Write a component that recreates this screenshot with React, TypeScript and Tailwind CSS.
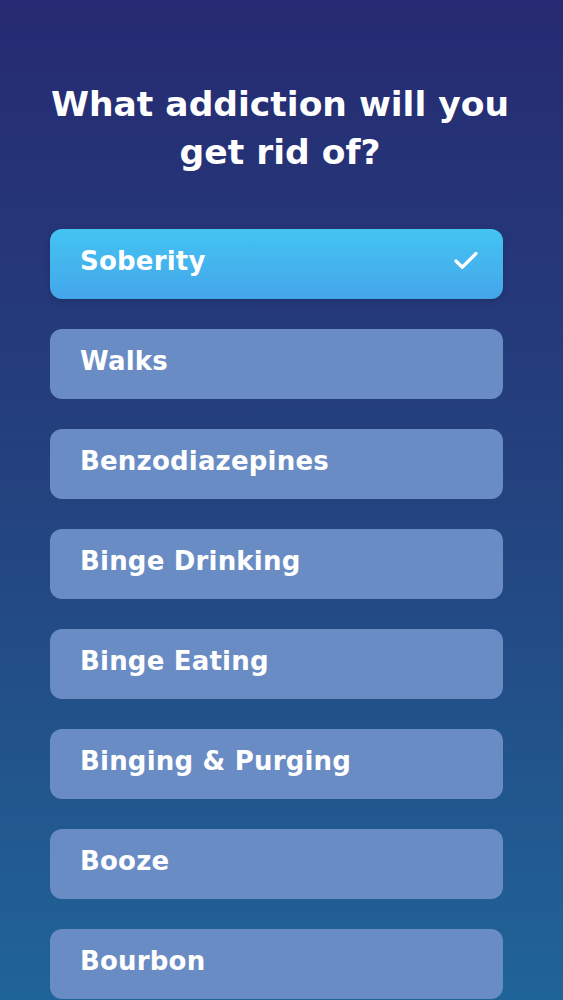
import { Check } from 'lucide-react';

const options = [
  'Soberity',
  'Walks',
  'Benzodiazepines',
  'Binge Drinking',
  'Binge Eating',
  'Binging & Purging',
  'Booze',
  'Bourbon',
];

export default function App() {
  return (
    <div
      className="h-[1000px] w-full overflow-hidden bg-gradient-to-b from-[#262a72] via-[#23437f] to-[#1f6498] pt-[80px]"
      style={{ fontFamily: '"DejaVu Sans", "Open Sans", sans-serif' }}
    >
      <h1 className="whitespace-nowrap pr-[3px] text-center text-[34.5px] font-bold leading-[48px] text-white">
        What addiction will you
        <br />
        get rid of?
      </h1>

      <div className="mt-[53px] flex flex-col gap-[30px] pl-[50px] pr-[60px]">
        {options.map((name, i) => (
          <button
            key={name}
            className={
              i === 0
                ? 'flex h-[70px] w-full shrink-0 items-center justify-between rounded-[12px] bg-gradient-to-b from-[#43c4f2] to-[#44a6ea] pl-[30px] pr-[22px] pb-[6px] text-left shadow-[0_2px_6px_rgba(0,0,0,0.15)]'
                : 'flex h-[70px] w-full shrink-0 items-center rounded-[12px] bg-[#6a8cc4] pl-[30px] pb-[6px] text-left'
            }
          >
            <span className="text-[26px] font-bold tracking-[0.2px] text-white">{name}</span>
            {i === 0 && <Check className="h-[30px] w-[30px] text-white" strokeWidth={2.6} />}
          </button>
        ))}
      </div>
    </div>
  );
}
